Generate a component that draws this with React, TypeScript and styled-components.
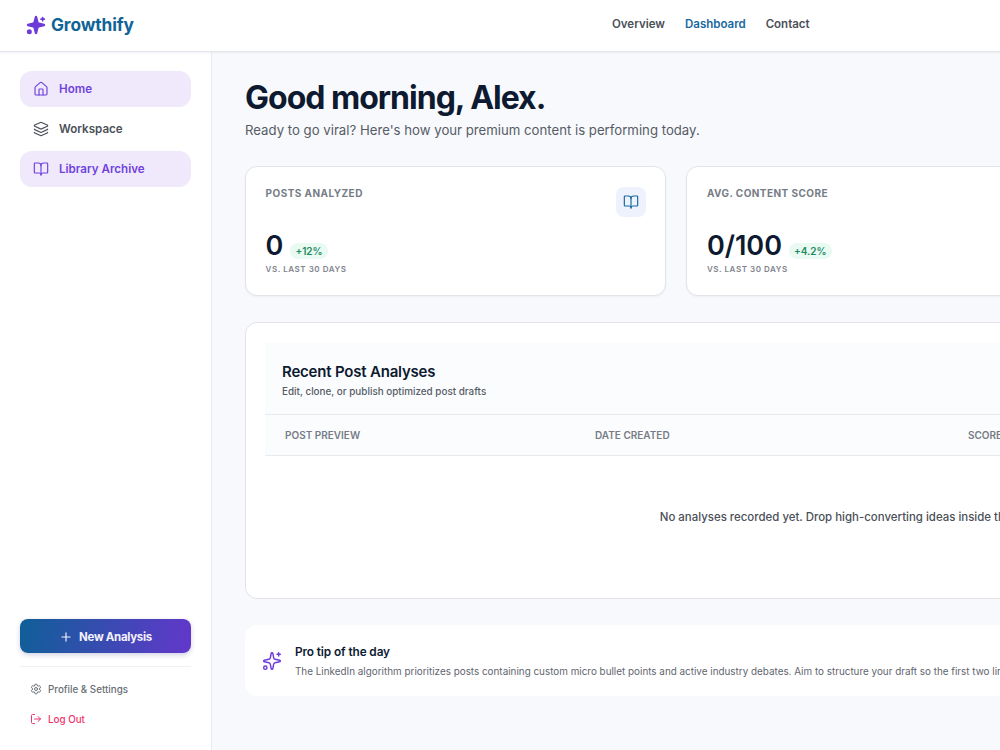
import React from 'react';
import styled, { createGlobalStyle } from 'styled-components';
import { BookOpen, House, Layers, LogOut, Plus, Settings, Sparkles } from 'lucide-react';

const GlobalStyle = createGlobalStyle`
  html, body {
    margin: 0;
    height: 100%;
    overflow: hidden;
    background: #f8f9fc;
    font-family: Inter, "Liberation Sans", sans-serif;
  }
  * { box-sizing: border-box; }
`;

const App = () => {
  return (
    <Page>
      <GlobalStyle />
      <TopBar>
        <Brand>
          <svg width="20" height="20" viewBox="0 0 24 24" fill="#6d3bd8" stroke="#6d3bd8" strokeWidth="2" strokeLinecap="round" strokeLinejoin="round">
            <path d="M9.94 15.5a2 2 0 0 0-1.44-1.44l-6.14-1.58a.5.5 0 0 1 0-.96l6.14-1.59a2 2 0 0 0 1.44-1.43l1.58-6.14a.5.5 0 0 1 .96 0l1.58 6.14a2 2 0 0 0 1.44 1.44l6.14 1.58a.5.5 0 0 1 0 .96l-6.14 1.58a2 2 0 0 0-1.44 1.44l-1.58 6.14a.5.5 0 0 1-.96 0z" />
            <path d="M20 3v4" fill="none" />
            <path d="M22 5h-4" fill="none" />
            <circle cx="4" cy="20" r="2" />
          </svg>
          <BrandName>Growthify</BrandName>
        </Brand>
        <TopNav>
          <TopLink>Overview</TopLink>
          <TopLink $active>Dashboard</TopLink>
          <TopLink>Contact</TopLink>
        </TopNav>
      </TopBar>
      <Body>
        <Sidebar>
          <SideNav>
            <SideItem $active><House size={16} strokeWidth={1.75} />Home</SideItem>
            <SideItem><Layers size={16} strokeWidth={1.75} />Workspace</SideItem>
            <SideItem $active><BookOpen size={16} strokeWidth={1.75} />Library Archive</SideItem>
          </SideNav>
          <SideFooter>
            <NewButton><Plus size={14} strokeWidth={2} />New Analysis</NewButton>
            <Divider />
            <FooterLink><Settings size={12} strokeWidth={2} />Profile &amp; Settings</FooterLink>
            <FooterLink $danger><LogOut size={12} strokeWidth={2} />Log Out</FooterLink>
          </SideFooter>
        </Sidebar>
        <Main>
          <Greeting>Good morning, Alex.</Greeting>
          <SubGreeting>Ready to go viral? Here's how your premium content is performing today.</SubGreeting>
          <Stats>
            <StatCard>
              <StatTop>
                <StatLabel>Posts Analyzed</StatLabel>
                <StatIcon><BookOpen size={16} strokeWidth={1.75} /></StatIcon>
              </StatTop>
              <StatRow>
                <StatValue>0</StatValue>
                <Delta>+12%</Delta>
              </StatRow>
              <StatNote>vs. last 30 days</StatNote>
            </StatCard>
            <StatCard>
              <StatTop>
                <StatLabel>Avg. Content Score</StatLabel>
              </StatTop>
              <StatRow>
                <StatValue>0/100</StatValue>
                <Delta>+4.2%</Delta>
              </StatRow>
              <StatNote>vs. last 30 days</StatNote>
            </StatCard>
            <StatCard />
          </Stats>
          <TableCard>
            <TableHead>
              <TableTitle>Recent Post Analyses</TableTitle>
              <TableSub>Edit, clone, or publish optimized post drafts</TableSub>
            </TableHead>
            <ColumnRow>
              <Column>Post Preview</Column>
              <Column>Date Created</Column>
              <Column>Score</Column>
            </ColumnRow>
            <EmptyRow>No analyses recorded yet. Drop high-converting ideas inside the analyzer to get going.</EmptyRow>
          </TableCard>
          <TipCard>
            <TipIcon><Sparkles size={20} strokeWidth={1.75} /></TipIcon>
            <div>
              <TipTitle>Pro tip of the day</TipTitle>
              <TipText>The LinkedIn algorithm prioritizes posts containing custom micro bullet points and active industry debates. Aim to structure your draft so the first two lines hook the reader before the fold.</TipText>
            </div>
          </TipCard>
        </Main>
      </Body>
    </Page>
  );
};

const Page = styled.div`
  width: 1000px;
  height: 750px;
  display: flex;
  flex-direction: column;
  overflow: hidden;
`;

const TopBar = styled.header`
  height: 52px;
  flex: none;
  display: flex;
  align-items: center;
  padding: 0 26px 2px;
  background: #ffffff;
  border-bottom: 1px solid #e4e6eb;
  box-shadow: 0 1px 2px rgba(20, 30, 50, 0.06);
  position: relative;
`;

const Brand = styled.div`
  width: 586px;
  display: flex;
  align-items: center;
  gap: 5px;
`;

const BrandName = styled.span`
  font-size: 17.3px;
  font-weight: 700;
  color: #0f6396;
  letter-spacing: -0.1px;
`;

const TopNav = styled.nav`
  display: flex;
  gap: 20px;
  margin-bottom: 1px;
`;

const TopLink = styled.a<{ $active?: boolean }>`
  font-size: 11.5px;
  font-weight: 600;
  color: ${(p) => (p.$active ? '#17699f' : '#4b5059')};
`;

const Body = styled.div`
  flex: 1;
  display: flex;
  min-height: 0;
`;

const Sidebar = styled.aside`
  width: 212px;
  flex: none;
  display: flex;
  flex-direction: column;
  justify-content: space-between;
  padding: 19px 20px 16px;
  background: #ffffff;
  border-right: 1px solid #e9ebf0;
`;

const SideNav = styled.nav`
  display: flex;
  flex-direction: column;
  gap: 4px;
`;

const SideItem = styled.a<{ $active?: boolean }>`
  height: 36px;
  display: flex;
  align-items: center;
  gap: 10px;
  padding: 0 13px;
  border-radius: 12px;
  font-size: 11.6px;
  font-weight: 600;
  color: ${(p) => (p.$active ? '#6f42dc' : '#4b5059')};
  background: ${(p) => (p.$active ? '#efe9fb' : 'transparent')};
`;

const SideFooter = styled.div`
  display: flex;
  flex-direction: column;
`;

const NewButton = styled.button`
  height: 34px;
  display: flex;
  align-items: center;
  justify-content: center;
  gap: 6px;
  padding: 1px 0 0;
  border: 0;
  border-radius: 8px;
  color: #f3f1fd;
  background: linear-gradient(100deg, #0f5f98, #6337cb);
  box-shadow: 0 2px 5px rgba(40, 50, 120, 0.22);
  font-family: inherit;
  font-size: 11.5px;
  font-weight: 700;
  letter-spacing: -0.3px;
`;

const Divider = styled.div`
  height: 1px;
  margin: 13px 0 7px;
  background: #f0f1f4;
`;

const FooterLink = styled.a<{ $danger?: boolean }>`
  height: 30px;
  display: flex;
  align-items: center;
  gap: 6px;
  padding-left: 10px;
  font-size: 9.8px;
  font-weight: 500;
  color: ${(p) => (p.$danger ? '#f0336e' : '#696e76')};
`;

const Main = styled.main`
  width: 1370px;
  flex: none;
  padding: 26px 33px 0;
`;

const Greeting = styled.h1`
  margin: 0;
  font-size: 32px;
  line-height: 40px;
  font-weight: 700;
  letter-spacing: -1px;
  color: #0d1a30;
`;

const SubGreeting = styled.p`
  margin: 2px 0 0;
  font-size: 13.2px;
  line-height: 20px;
  color: #565c66;
`;

const Stats = styled.section`
  display: grid;
  grid-template-columns: repeat(3, 421.3px);
  gap: 20px;
  margin-top: 26px;
`;

const StatCard = styled.div`
  height: 130px;
  padding: 20px 19.6px;
  background: #ffffff;
  border: 1px solid #e2e4ea;
  border-radius: 12px;
  box-shadow: 0 1px 2px rgba(20, 30, 50, 0.05);
`;

const StatTop = styled.div`
  height: 37px;
  display: flex;
  justify-content: space-between;
  align-items: flex-start;
`;

const StatLabel = styled.span`
  font-size: 10px;
  line-height: 12px;
  font-weight: 700;
  letter-spacing: 0.45px;
  text-transform: uppercase;
  color: #767c86;
`;

const StatIcon = styled.span`
  width: 30px;
  height: 30px;
  display: flex;
  align-items: center;
  justify-content: center;
  border-radius: 8px;
  color: #17699f;
  background: #edf2fc;
`;

const StatRow = styled.div`
  display: flex;
  align-items: flex-end;
  gap: 7px;
  margin-top: 7px;
`;

const StatValue = styled.span`
  font-size: 27px;
  line-height: 30px;
  font-weight: 600;
  color: #0d1a30;
`;

const Delta = styled.span`
  height: 16px;
  padding: 0 5px;
  margin-bottom: 2px;
  border-radius: 8px;
  font-size: 10px;
  line-height: 16px;
  font-weight: 600;
  color: #1e8a5f;
  background: #e8faf2;
`;

const StatNote = styled.div`
  margin-top: 2px;
  font-size: 8px;
  line-height: 12px;
  font-weight: 600;
  letter-spacing: 0.55px;
  text-transform: uppercase;
  color: #7f848d;
`;

const TableCard = styled.section`
  width: 1303px;
  height: 277px;
  margin-top: 26px;
  padding: 20px 19px;
  background: #ffffff;
  border: 1px solid #e2e4ea;
  border-radius: 12px;
`;

const TableHead = styled.div`
  height: 72px;
  padding: 19px 17px 0;
  background: #fbfcfe;
  border-bottom: 1px solid #e8eaee;
`;

const TableTitle = styled.h2`
  margin: 0;
  font-size: 15px;
  line-height: 20px;
  font-weight: 600;
  letter-spacing: -0.2px;
  color: #0d1a30;
`;

const TableSub = styled.p`
  margin: 2px 0 0;
  font-size: 9.9px;
  line-height: 14px;
  font-weight: 500;
  color: #575d67;
`;

const ColumnRow = styled.div`
  height: 41px;
  display: grid;
  grid-template-columns: 310px 373px 1fr;
  align-items: center;
  padding: 0 20px;
  background: #fbfcfe;
  border-bottom: 1px solid #e8eaee;
`;

const Column = styled.span`
  font-size: 10px;
  font-weight: 600;
  text-transform: uppercase;
  color: #767c86;
`;

const EmptyRow = styled.div`
  height: 122px;
  display: flex;
  align-items: center;
  justify-content: center;
  font-size: 11.45px;
  font-weight: 500;
  color: #4b5059;
`;

const TipCard = styled.section`
  width: 1303px;
  height: 71px;
  margin-top: 26px;
  display: flex;
  align-items: center;
  gap: 13px;
  padding: 0 17px;
  background: #ffffff;
  border-radius: 12px;
`;

const TipIcon = styled.span`
  display: flex;
  color: #6d3bd8;
`;

const TipTitle = styled.div`
  margin-top: 1px;
  font-size: 11.8px;
  line-height: 16px;
  font-weight: 600;
  letter-spacing: -0.1px;
  color: #0d1a30;
`;

const TipText = styled.div`
  margin-top: 4px;
  font-size: 9.9px;
  line-height: 14px;
  white-space: nowrap;
  color: #5f656e;
`;

export default App;
